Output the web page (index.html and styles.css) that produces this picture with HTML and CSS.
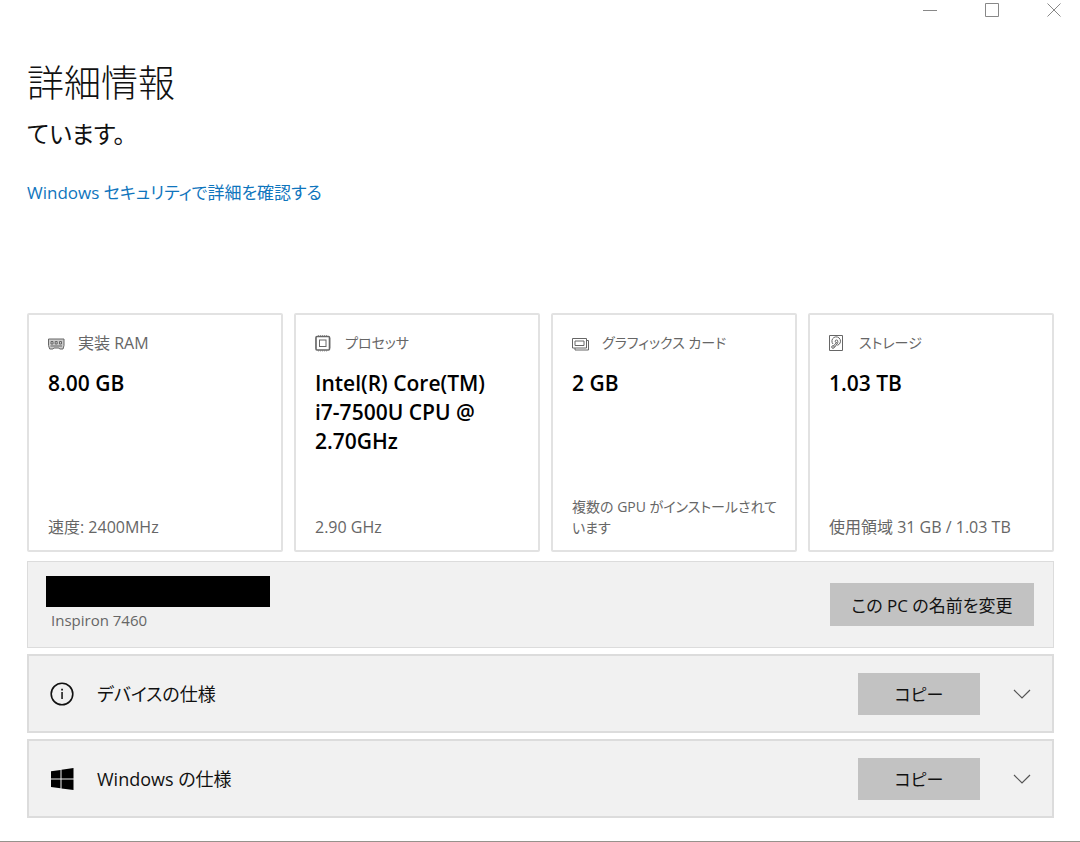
FILE: index.html
```html
<!DOCTYPE html>
<html lang="ja">
<head>
<meta charset="utf-8">
<title>詳細情報</title>
<link rel="stylesheet" href="styles.css">
</head>
<body>
<header class="titlebar">
  <button class="window-button" aria-label="最小化"><svg width="16" height="16" viewBox="0 0 16 16"><path d="M1 8.500h14"/></svg></button>
  <button class="window-button" aria-label="最大化"><svg width="16" height="16" viewBox="0 0 16 16"><path d="M1.500 1.500h13v13h-13z"/></svg></button>
  <button class="window-button" aria-label="閉じる"><svg width="16" height="16" viewBox="0 0 16 16"><path d="M1.500 1.500l13 13M14.500 1.500l-13 13"/></svg></button>
</header>
<main class="content">
  <h1 class="title">詳細情報</h1>
  <p class="status">ています。</p>
  <a class="security-link" href="#">Windows セキュリティで詳細を確認する</a>

  <section class="cards">
    <article class="card">
      <h2 class="card-label">
        <svg class="card-icon" width="18" height="18" viewBox="0 0 18 18"><path d="M.5 5h15.500v6.500l-1 3.500h-3.300l-.8-1H5.800l-.8 1H1.700l-1.200-3.500z" fill="#ccc"/><path d="M3 7.500h2v2.500H3zM7.200 7.500h2v2.500h-2zM11.500 7.500h2v2.500h-2zM2.500 12h11.500"/></svg>
        <span>実装 RAM</span>
      </h2>
      <p class="card-value">8.00 GB</p>
      <p class="card-note">速度: 2400MHz</p>
    </article>
    <article class="card">
      <h2 class="card-label">
        <svg class="card-icon" width="18" height="18" viewBox="0 0 18 18"><rect x="1" y="2.500" width="13.500" height="13.500" rx="1" stroke-width="1.600"/><rect x="4.500" y="6" width="6.500" height="6.500"/><path d="M3 1.500h10M3 17h10M.3 4.500v10M15.300 4.500v10" stroke-dasharray="1 1" stroke-width=".6"/></svg>
        <span class="compact">プロセッサ</span>
      </h2>
      <p class="card-value">Intel(R) Core(TM)<br>i7-7500U CPU @ 2.70GHz</p>
      <p class="card-note">2.90 GHz</p>
    </article>
    <article class="card">
      <h2 class="card-label">
        <svg class="card-icon" width="18" height="18" viewBox="0 0 18 18"><path d="M.5 4.500h14v9.500H.5zM3 7h9v4.500H3zM14.500 6.500h2v9.500H3v-2"/></svg>
        <span class="compact">グラフィックス カード</span>
      </h2>
      <p class="card-value">2 GB</p>
      <p class="card-note compact">複数の GPU がインストールされています</p>
    </article>
    <article class="card">
      <h2 class="card-label">
        <svg class="card-icon" width="18" height="18" viewBox="0 0 18 18"><path d="M.5 1.500H13.500v15H.5z"/><path d="M4 10a4.300 4.300 0 1 1 4.300 1.300"/><circle cx="7.500" cy="7.300" r="1.300"/><path d="M7.500 8.500l-3 3.500M9 8.500l-3.500 5"/><circle cx="4" cy="13" r="1.300"/></svg>
        <span class="compact">ストレージ</span>
      </h2>
      <p class="card-value">1.03 TB</p>
      <p class="card-note">使用領域 31 GB / 1.03 TB</p>
    </article>
  </section>

  <section class="panel panel-device">
    <div class="device">
      <div class="device-name"></div>
      <p class="device-model">Inspiron 7460</p>
    </div>
    <button class="button button-rename">この PC の名前を変更</button>
  </section>

  <section class="panel">
    <svg class="panel-icon" width="24" height="24" viewBox="0 0 24 24"><circle cx="12" cy="12" r="10.800" fill="none" stroke="#111" stroke-width="1.600"/><path d="M11.300 10h1.500v7h-1.500zM11.200 6.800h1.700v1.700h-1.700z" fill="#111"/></svg>
    <h2 class="panel-title">デバイスの仕様</h2>
    <button class="button button-copy">コピー</button>
    <button class="expander" aria-label="デバイスの仕様を展開"><svg width="18" height="18" viewBox="0 0 18 18"><path d="M1 5l8 8 8-8"/></svg></button>
  </section>

  <section class="panel">
    <svg class="panel-icon" width="24" height="24" viewBox="0 0 24 24"><path d="M1 4.200l9.500-1.300v8.500H1zM11.500 2.700L23.500 1v10.400h-12zM1 12.600h9.500v8.700L1 20zM11.500 12.600h12V23l-12-1.600z" fill="#000"/></svg>
    <h2 class="panel-title">Windows の仕様</h2>
    <button class="button button-copy">コピー</button>
    <button class="expander" aria-label="Windows の仕様を展開"><svg width="18" height="18" viewBox="0 0 18 18"><path d="M1 5l8 8 8-8"/></svg></button>
  </section>
</main>
</body>
</html>
```

FILE: styles.css
```css
* {
  box-sizing: border-box;
}

body {
  display: flex;
  flex-direction: column;
  min-height: 100vh;
  margin: 0;
  border-bottom: 1px solid #96928c;
  background: #fff;
  color: #111;
  font-family: "Open Sans", "Noto Sans CJK JP", sans-serif;
  font-feature-settings: "palt";
}

h1, h2, p {
  margin: 0;
  font-weight: 400;
}

button {
  border: 0;
  padding: 0;
  background: transparent;
  color: inherit;
  font: inherit;
  font-feature-settings: inherit;
}

svg {
  display: block;
  flex: none;
}

.titlebar {
  display: flex;
  justify-content: flex-end;
  gap: 46px;
  height: 20px;
  padding-right: 18px;
}

.window-button {
  display: flex;
  align-items: center;
}

.window-button svg {
  fill: none;
  stroke: #888;
}

.expander svg {
  fill: none;
  stroke: #555;
  stroke-width: 1.2;
}

.content {
  padding: 0 26px 20px 27px;
}

.title {
  margin-top: 36px;
  font-size: 37px;
  font-weight: 300;
  line-height: 54px;
  font-feature-settings: normal;
}

.status {
  margin-top: 8px;
  font-size: 24px;
  line-height: 32px;
}

.security-link {
  display: block;
  width: fit-content;
  margin-top: 29px;
  color: #0f75bd;
  font-size: 17px;
  line-height: 28px;
  text-decoration: none;
}

.cards {
  display: grid;
  grid-template-columns: 256fr 246fr 246fr 246fr;
  gap: 11px;
  margin-top: 106px;
}

.card {
  display: flex;
  flex-direction: column;
  min-height: 239px;
  padding: 17px 14px 12px 19px;
  border: 2px solid #e2e2e2;
  border-radius: 2px;
}

.card-label {
  display: flex;
  align-items: center;
  gap: 12px;
  color: #666;
  font-size: 16px;
  line-height: 22px;
}

.card-icon {
  fill: none;
  stroke: #666;
}

.card-value {
  margin: 15px 0 auto;
  color: #000;
  font-size: 21px;
  font-weight: 600;
  line-height: 29px;
}

.card-note {
  color: #666;
  font-size: 16px;
  line-height: 21px;
}

.compact {
  font-size: 14px;
}

.panel {
  display: flex;
  align-items: center;
  min-height: 79px;
  margin-top: 6px;
  padding: 0 21px;
  border: 2px solid #dcdcdc;
  background: #f1f1f1;
}

.panel-device {
  align-items: flex-start;
  min-height: 87px;
  margin-top: 9px;
  padding: 14px 19px 0 18px;
  border-width: 1px;
}

.device {
  margin-right: auto;
}

.device-name {
  width: 224px;
  height: 31px;
  background: #000;
}

.device-model {
  margin-top: 2px;
  padding-left: 5px;
  color: #666;
  font-size: 15px;
  line-height: 22px;
}

.panel-title {
  margin: 0 auto 0 23px;
  font-size: 18px;
  line-height: 28px;
}

.button {
  background: #c2c2c2;
  font-size: 17px;
}

.button-rename {
  width: 204px;
  height: 43px;
  margin-top: 7px;
}

.button-copy {
  width: 122px;
  height: 42px;
}

.expander {
  margin-left: 33px;
}
```
